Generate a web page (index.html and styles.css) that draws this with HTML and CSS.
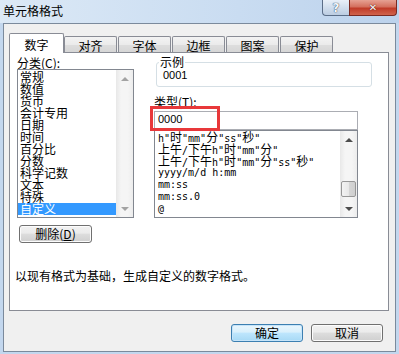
FILE: index.html
```html
<!DOCTYPE html>
<html lang="zh-CN">
<head>
    <meta charset="UTF-8">
    <title>单元格格式</title>
    <link rel="stylesheet" href="styles.css">
</head>
<body>
    <div class="window">
        <header class="titlebar">
            <span class="title">单元格格式</span>
            <div class="caption-btns">
                <span class="cap-btn help">?</span>
                <span class="cap-btn close">✕</span>
            </div>
        </header>

        <main class="client">
            <nav class="tabs">
                <span class="tab active">数字</span>
                <span class="tab">对齐</span>
                <span class="tab">字体</span>
                <span class="tab">边框</span>
                <span class="tab">图案</span>
                <span class="tab">保护</span>
            </nav>

            <section class="panel">
                <div class="panel-top">
                    <div class="left-col">
                        <div class="label">分类(<u>C</u>):</div>
                        <div class="listbox cat-list">
                            <ul class="items">
                                <li>常规</li>
                                <li>数值</li>
                                <li>货币</li>
                                <li>会计专用</li>
                                <li>日期</li>
                                <li>时间</li>
                                <li>百分比</li>
                                <li>分数</li>
                                <li>科学记数</li>
                                <li>文本</li>
                                <li>特殊</li>
                                <li class="selected">自定义</li>
                            </ul>
                            <div class="scrollbar disabled">
                                <span class="sb-btn"><i class="arrow up"></i></span>
                                <span class="sb-track"></span>
                                <span class="sb-btn"><i class="arrow down"></i></span>
                            </div>
                        </div>
                        <button class="button delete">删除(<u>D</u>)</button>
                    </div>

                    <div class="right-col">
                        <div class="sample">
                            <span class="sample-caption">示例</span>
                            <div class="sample-value">0001</div>
                        </div>
                        <div class="label type-label">类型(<u>T</u>):</div>
                        <div class="type-wrap">
                            <div class="textbox">0000</div>
                            <span class="highlight"></span>
                        </div>
                        <div class="listbox fmt-list">
                            <ul class="items">
                                <li>h"<span class="cj">时</span>"mm"<span class="cj">分</span>"ss"<span class="cj">秒</span>"</li>
                                <li><span class="cj">上午</span>/<span class="cj">下午</span>h"<span class="cj">时</span>"mm"<span class="cj">分</span>"</li>
                                <li><span class="cj">上午</span>/<span class="cj">下午</span>h"<span class="cj">时</span>"mm"<span class="cj">分</span>"ss"<span class="cj">秒</span>"</li>
                                <li>yyyy/m/d h:mm</li>
                                <li>mm:ss</li>
                                <li>mm:ss.0</li>
                                <li>@</li>
                            </ul>
                            <div class="scrollbar">
                                <span class="sb-btn"><i class="arrow up"></i></span>
                                <span class="sb-track"><span class="sb-thumb"></span></span>
                                <span class="sb-btn"><i class="arrow down"></i></span>
                            </div>
                        </div>
                    </div>
                </div>

                <p class="description">以现有格式为基础，生成自定义的数字格式。</p>
            </section>

            <div class="dialog-buttons">
                <button class="button default">确定</button>
                <button class="button">取消</button>
            </div>
        </main>
    </div>
</body>
</html>
```

FILE: styles.css
```css
:root {
    --frame: #c3d7ee;
    --face: #f0f0f0;
    --tab-border: #898c95;
    --list-border: #828790;
    --select: #3399ff;
}

* {
    margin: 0;
    padding: 0;
    box-sizing: border-box;
}

body {
    width: 399px;
    height: 354px;
    overflow: hidden;
    background: var(--frame);
    font-family: "Noto Sans CJK SC", "Liberation Sans", sans-serif;
    font-size: 12px;
    color: #000;
}

u {
    text-decoration: underline;
}

.window {
    height: 354px;
    display: flex;
    flex-direction: column;
}

.titlebar {
    height: 23px;
    display: flex;
    align-items: flex-start;
    background: linear-gradient(90deg, #dce9f6, #c9dcf1 60%, #bcd2ec);
}

.title {
    padding: 4px 0 0 3px;
    line-height: 14px;
}

.caption-btns {
    margin-left: auto;
    margin-right: 2px;
    display: flex;
}

.cap-btn {
    height: 16px;
    display: flex;
    align-items: center;
    justify-content: center;
    font-family: "DejaVu Sans", sans-serif;
    font-weight: bold;
    color: #fff;
    border: 1px solid #5b6e88;
    border-top: none;
}

.help {
    width: 27px;
    border-right: none;
    border-radius: 0 0 0 4px;
    background: linear-gradient(#e9f0f8, #d1deed 50%, #bccde2);
    color: #f4f7fb;
    font-size: 12px;
    text-shadow: 0 0 1px #33475f, 0 0 1px #33475f;
}

.close {
    width: 48px;
    border-color: #7a2a22;
    border-radius: 0 0 4px 0;
    background: linear-gradient(#e6a193, #d4705e 45%, #c03b28 55%, #d0634c);
    font-size: 10px;
    text-shadow: 0 0 1px #5a1a12, 0 0 1px #5a1a12;
}

.client {
    margin-left: 3px;
    width: 393px;
    height: 329px;
    border: 1px solid #7b8a9c;
    background: var(--face);
    padding: 9px 6px 0 5px;
}

.tabs {
    height: 19px;
    display: flex;
    align-items: flex-end;
}

.tab {
    width: 53px;
    height: 16px;
    margin-left: 1px;
    line-height: 16px;
    padding-top: 1px;
    text-align: center;
    border: 1px solid var(--tab-border);
    border-bottom: none;
    border-radius: 2px 2px 0 0;
    background: linear-gradient(#f3f3f3, #ebebeb 50%, #dedede 51%, #d6d6d6);
}

.tab.active {
    width: 55px;
    height: 20px;
    margin-left: 0;
    margin-bottom: -1px;
    line-height: 19px;
    padding-top: 1px;
    background: #fff;
    position: relative;
    z-index: 1;
}

.tab.active + .tab {
    margin-left: 0;
}

.panel {
    width: 380px;
    height: 259px;
    border: 1px solid var(--tab-border);
    background: #fff;
    display: flex;
    flex-direction: column;
}

.panel-top {
    display: flex;
    align-items: flex-start;
    padding: 4px 0 0 7px;
}

.left-col {
    width: 117px;
    display: flex;
    flex-direction: column;
    align-items: flex-start;
}

.label {
    height: 12px;
    line-height: 12px;
}

.listbox {
    border: 1px solid var(--list-border);
    display: flex;
    background: #fff;
}

.items {
    list-style: none;
    flex: 1;
}

.cat-list {
    width: 117px;
    height: 149px;
}

.cat-list .items {
    padding-top: 1px;
}

.cat-list li {
    height: 12px;
    line-height: 12px;
    padding-left: 2px;
    white-space: nowrap;
}

.cat-list li.selected {
    background: var(--select);
    color: #fff;
}

.scrollbar {
    width: 17px;
    display: flex;
    flex-direction: column;
    background: linear-gradient(90deg, #e8e8e8, #f5f5f5 30%, #f5f5f5 70%, #ececec);
}

.sb-btn {
    height: 17px;
    display: flex;
    align-items: center;
    justify-content: center;
}

.sb-track {
    flex: 1;
    display: flex;
    flex-direction: column;
    align-items: center;
}

.sb-thumb {
    width: 15px;
    height: 16px;
    margin-top: 33px;
    border: 1px solid #979797;
    border-radius: 2px;
    background: linear-gradient(90deg, #f3f3f3, #e8e8e8 50%, #d6d6d6 51%, #cfcfcf);
}

.arrow {
    width: 0;
    height: 0;
    border-left: 4px solid transparent;
    border-right: 4px solid transparent;
}

.arrow.up {
    border-bottom: 4px solid #4d4d4d;
}

.arrow.down {
    border-top: 4px solid #4d4d4d;
}

.disabled .arrow.up {
    border-bottom-color: #a3a3a3;
}

.disabled .arrow.down {
    border-top-color: #a3a3a3;
}

.button {
    height: 18px;
    width: 72px;
    font-family: "Noto Sans CJK SC", "Liberation Sans", sans-serif;
    font-size: 12px;
    line-height: 14px;
    color: #000;
    border: 1px solid #707070;
    border-radius: 3px;
    background: linear-gradient(#f2f2f2, #ebebeb 45%, #dddddd 50%, #cfcfcf);
    box-shadow: inset 0 0 0 1px #fcfcfc;
}

.delete {
    width: 73px;
    margin: 7px 0 0 2px;
}

.default {
    border-color: #3c7fb1;
    box-shadow: inset 0 0 0 1px #c6e4f9;
    background: linear-gradient(#eaf6fd, #d9f0fc 45%, #bee6fd 50%, #a7d9f5);
}

.right-col {
    width: 218px;
    margin: 5px 0 0 20px;
    display: flex;
    flex-direction: column;
}

.sample {
    position: relative;
    width: 216px;
    height: 25px;
    margin-left: 2px;
    border: 1px solid #d5dfe5;
    border-radius: 3px;
}

.sample-caption {
    position: absolute;
    top: -7px;
    left: 2px;
    padding: 0 1px;
    line-height: 12px;
    background: #fff;
}

.sample-value,
.textbox {
    font-family: "Liberation Sans", sans-serif;
    font-size: 11px;
    line-height: 13px;
}

.sample-value {
    padding: 6px 0 0 6px;
}

.type-label {
    margin-top: 9px;
}

.type-wrap {
    position: relative;
    margin-top: 3px;
}

.textbox {
    width: 204px;
    height: 19px;
    border: 1px solid #abadb3;
    padding: 1px 0 0 3px;
    background: #fff;
}

.highlight {
    position: absolute;
    left: -4px;
    top: -5px;
    width: 70px;
    height: 25px;
    border: 3px solid #e8383a;
    z-index: 2;
}

.fmt-list {
    width: 204px;
    height: 88px;
}

.fmt-list li {
    height: 12px;
    line-height: 12px;
    padding-left: 3px;
    white-space: nowrap;
    font-family: "DejaVu Sans Mono", monospace;
    font-size: 10px;
}

.cj {
    font-family: "Noto Sans CJK SC", sans-serif;
    font-size: 12px;
    line-height: 12px;
}

.description {
    margin-top: 26px;
    padding-left: 5px;
    line-height: 14px;
}

.dialog-buttons {
    display: flex;
    justify-content: flex-end;
    gap: 8px;
    margin: 13px 6px 0 0;
}
```
